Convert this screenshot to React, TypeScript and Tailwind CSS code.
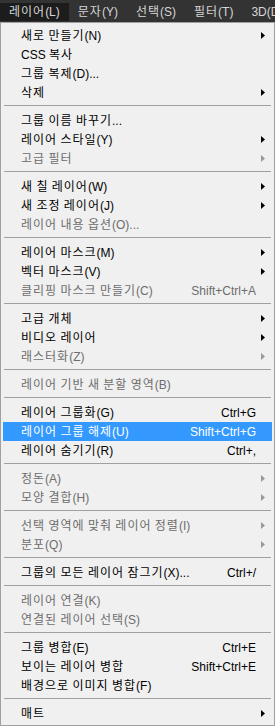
import React from "react";

type Item = { label: string; shortcut?: string; sub?: boolean; disabled?: boolean; active?: boolean };
type Entry = Item | "sep";

const entries: Entry[] = [
  { label: "새로 만들기(N)", sub: true },
  { label: "CSS 복사" },
  { label: "그룹 복제(D)..." },
  { label: "삭제", sub: true },
  "sep",
  { label: "그룹 이름 바꾸기..." },
  { label: "레이어 스타일(Y)", sub: true },
  { label: "고급 필터", sub: true, disabled: true },
  "sep",
  { label: "새 칠 레이어(W)", sub: true },
  { label: "새 조정 레이어(J)", sub: true },
  { label: "레이어 내용 옵션(O)...", disabled: true },
  "sep",
  { label: "레이어 마스크(M)", sub: true },
  { label: "벡터 마스크(V)", sub: true },
  { label: "클리핑 마스크 만들기(C)", shortcut: "Shift+Ctrl+A", disabled: true },
  "sep",
  { label: "고급 개체", sub: true },
  { label: "비디오 레이어", sub: true },
  { label: "래스터화(Z)", sub: true, disabled: true },
  "sep",
  { label: "레이어 기반 새 분할 영역(B)", disabled: true },
  "sep",
  { label: "레이어 그룹화(G)", shortcut: "Ctrl+G" },
  { label: "레이어 그룹 해제(U)", shortcut: "Shift+Ctrl+G", active: true },
  { label: "레이어 숨기기(R)", shortcut: "Ctrl+," },
  "sep",
  { label: "정돈(A)", sub: true, disabled: true },
  { label: "모양 결합(H)", sub: true, disabled: true },
  "sep",
  { label: "선택 영역에 맞춰 레이어 정렬(I)", sub: true, disabled: true },
  { label: "분포(Q)", sub: true, disabled: true },
  "sep",
  { label: "그룹의 모든 레이어 잠그기(X)...", shortcut: "Ctrl+/" },
  "sep",
  { label: "레이어 연결(K)", disabled: true },
  { label: "연결된 레이어 선택(S)", disabled: true },
  "sep",
  { label: "그룹 병합(E)", shortcut: "Ctrl+E" },
  { label: "보이는 레이어 병합", shortcut: "Shift+Ctrl+E" },
  { label: "배경으로 이미지 병합(F)" },
  "sep",
  { label: "매트", sub: true },
];

const bar = ["레이어(L)", "문자(Y)", "선택(S)", "필터(T)", "3D(D)"];

function K({ text }: { text: string }) {
  const parts = text.split(/([\uAC00-\uD7A3]+)/);
  return (
    <>
      {parts.map((p, i) =>
        /[\uAC00-\uD7A3]/.test(p) ? (
          <span key={i} className="tracking-[1px]">
            {p}
          </span>
        ) : (
          <span key={i}>{p}</span>
        )
      )}
    </>
  );
}

function Arrow({ color }: { color: string }) {
  return (
    <svg width="4" height="7" viewBox="0 0 4 7" className="block">
      <polygon points="0,0 4,3.5 0,7" fill={color} />
    </svg>
  );
}

export default function App() {
  return (
    <div
      className="w-[275px] h-[726px] overflow-hidden bg-[#f0f0f0] text-[12px]"
      style={{ fontFamily: '"Liberation Sans", "Noto Sans CJK KR", sans-serif' }}
    >
      <div className="h-[22px] bg-[#333333] flex items-start pt-[3px] whitespace-nowrap overflow-hidden">
        {bar.map((b, i) => (
          <div
            key={b}
            className={`h-[18px] px-[9px] flex items-center text-[#d6d6d6] shrink-0 ${i === 0 ? "bg-[#1c1c1c]" : ""}`}
          >
            <K text={b} />
          </div>
        ))}
      </div>
      <div className="h-[704px] border border-[#a0a0a0] px-[2px] pt-[3px] pb-[2px]">
        {entries.map((e, i) =>
          e === "sep" ? (
            <div key={i} className="h-[9px] pt-[3px] px-[1px]">
              <div className="h-px bg-[#a0a0a0]" />
            </div>
          ) : (
            <div
              key={i}
              className={`h-[19px] flex items-center pl-[18px] pr-[7px] whitespace-nowrap ${
                e.active ? "bg-[#3399ff] text-white" : e.disabled ? "text-[#6d6d6d]" : "text-black"
              }`}
            >
              <span className="flex-1">
                <K text={e.label} />
              </span>
              {e.shortcut && <span className="pr-[5px]">{e.shortcut}</span>}
              <span className="w-[4px] flex items-center">
                {e.sub && <Arrow color={e.disabled ? "#9a9a9a" : "#000"} />}
              </span>
            </div>
          )
        )}
      </div>
    </div>
  );
}
